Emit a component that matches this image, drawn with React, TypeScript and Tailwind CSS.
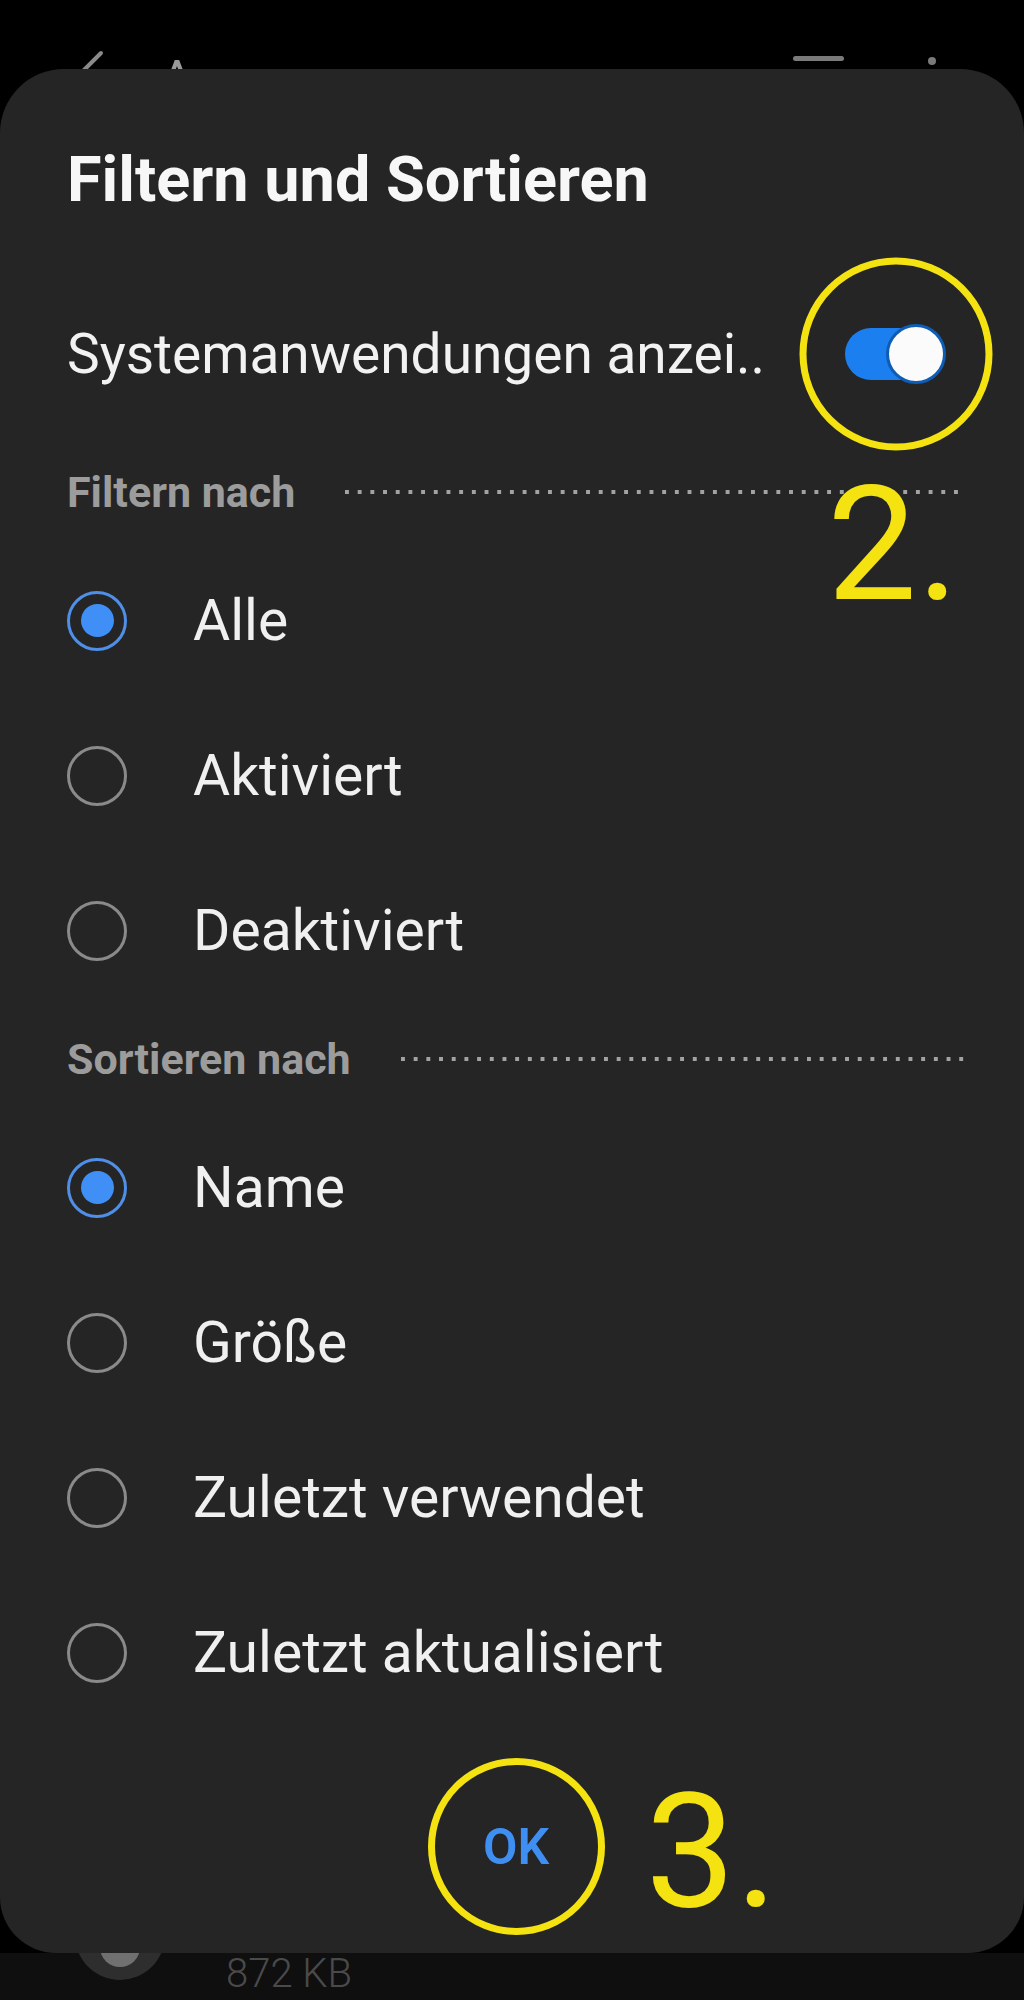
import type { ReactNode } from 'react';

const filterOptions = [
  { label: 'Alle', checked: true },
  { label: 'Aktiviert', checked: false },
  { label: 'Deaktiviert', checked: false },
];

const sortOptions = [
  { label: 'Name', checked: true },
  { label: 'Größe', checked: false },
  { label: 'Zuletzt verwendet', checked: false },
  { label: 'Zuletzt aktualisiert', checked: false },
];

function AppBar() {
  return (
    <div className="h-[69px] flex items-start">
      <svg className="ml-[72px] mt-[50px] w-[34px] h-[58px] shrink-0" viewBox="0 0 34 58" fill="none">
        <path d="M29 3 L4 28 L29 53" stroke="#8a8a8a" strokeWidth="4" strokeLinecap="round" strokeLinejoin="round" />
      </svg>
      <span className="ml-[54px] mt-[54px] text-[52px] leading-none text-[#9a9a9a]">Apps</span>
      <div className="ml-auto mt-[56px] w-[51px] h-[5px] rounded-sm bg-[#7a7a7a]" />
      <div className="ml-[84px] mr-[88px] mt-[57px] flex flex-col gap-[16px]">
        <div className="w-[8px] h-[8px] rounded-full bg-[#7a7a7a]" />
        <div className="w-[8px] h-[8px] rounded-full bg-[#7a7a7a]" />
      </div>
    </div>
  );
}

function Toggle() {
  return (
    <div className="relative w-[101px] h-[62px] mr-[19px]">
      <div className="absolute left-1/2 top-1/2 -translate-x-1/2 -translate-y-1/2 w-[193px] h-[193px] rounded-full border-[7px] border-[#f4e310]" />
      <div className="absolute left-0 top-[5px] w-[86px] h-[52px] rounded-full bg-[#1b7ff0]" />
      <div className="absolute right-0 top-[1px] w-[60px] h-[60px] rounded-full bg-[#fbfbfb] border-[3px] border-[#0d5cb5]" />
    </div>
  );
}

function SectionHeader({ label, className = '' }: { label: string; className?: string }) {
  return (
    <div className={`h-[102px] flex items-center gap-[50px] ${className}`}>
      <span className="text-[43px] font-bold text-[#9c9c9c] leading-none">{label}</span>
      <div className="flex-1 h-[4px] bg-[linear-gradient(to_right,#a3a3a3_4px,transparent_4px)] bg-[length:12.7px_4px] bg-repeat-x" />
    </div>
  );
}

function Radio({ checked }: { checked: boolean }) {
  if (checked) {
    return (
      <div className="w-[60px] h-[60px] rounded-full border-[3px] border-[#4f8fe8] flex items-center justify-center shrink-0">
        <div className="w-[33px] h-[33px] rounded-full bg-[#3f8ff6]" />
      </div>
    );
  }
  return <div className="w-[60px] h-[60px] rounded-full border-[3px] border-[#8a8a8a] shrink-0" />;
}

function OptionRow({ label, checked }: { label: string; checked: boolean }) {
  return (
    <div className="h-[155px] flex items-center gap-[66px]">
      <Radio checked={checked} />
      <span className="text-[57px] leading-none text-[#f0f0f0]">{label}</span>
    </div>
  );
}

function Annotation({ children, className }: { children: ReactNode; className: string }) {
  return <span className={`absolute text-[160px] leading-none font-normal text-[#f4e310] ${className}`}>{children}</span>;
}

export default function App() {
  return (
    <div className="w-[1024px] h-[2000px] bg-black overflow-hidden font-['Roboto',sans-serif]">
      <AppBar />

      <div className="relative z-10 h-[1884px] rounded-t-[64px] rounded-b-[56px] bg-[#252525] pt-[71px] pl-[67px] pr-[59px] flex flex-col">
        <h1 className="h-[80px] leading-[80px] text-[63px] font-bold text-[#f7f7f7]">Filtern und Sortieren</h1>

        <div className="mt-[84px] h-[100px] flex items-center justify-between">
          <span className="text-[55px] leading-none text-[#f2f2f2]">Systemanwendungen anzei..</span>
          <Toggle />
        </div>

        <SectionHeader label="Filtern nach" className="mt-[37px]" />
        {filterOptions.map((o) => (
          <OptionRow key={o.label} label={o.label} checked={o.checked} />
        ))}

        <SectionHeader label="Sortieren nach" />
        {sortOptions.map((o) => (
          <OptionRow key={o.label} label={o.label} checked={o.checked} />
        ))}

        <div className="mt-[28px] flex justify-center">
          <div className="relative w-[177px] h-[177px]">
            <div className="w-full h-full rounded-full border-[7px] border-[#f4e310] flex items-center justify-center">
              <span className="text-[50px] leading-none font-semibold text-[#3f8ff3]">OK</span>
            </div>
            <Annotation className="left-[218px] top-[14px]">3.</Annotation>
          </div>
        </div>

        <Annotation className="left-[827px] top-[396px]">2.</Annotation>
      </div>

      <div className="relative h-[47px] bg-[#0f0f0f]">
        <div className="absolute left-[75px] bottom-[20px] w-[90px] h-[90px] rounded-full bg-[#2e2e2e] flex items-end justify-center pb-[13px]">
          <div className="w-[40px] h-[40px] rounded-full bg-[#707070]" />
        </div>
        <span className="absolute left-[226px] top-[1px] text-[40px] leading-none font-light text-[#4a4a4a]">872 KB</span>
      </div>
    </div>
  );
}
